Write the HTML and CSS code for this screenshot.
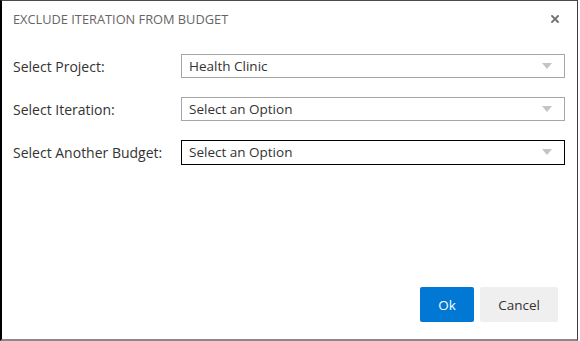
FILE: index.html
```html
<!DOCTYPE html>
<html>
<head>
<meta charset="utf-8">
<link rel="stylesheet" href="styles.css">
</head>
<body>
<div class="dialog">
  <div class="header">
    <div class="title">EXCLUDE ITERATION FROM BUDGET</div>
    <div class="close">
      <svg width="8" height="8" viewBox="0 0 8 8"><path d="M1 1 L7 7 M7 1 L1 7" stroke="#707070" stroke-width="1.9" stroke-linecap="square"/></svg>
    </div>
  </div>
  <div class="form">
    <div class="row">
      <label class="label">Select Project:</label>
      <div class="select"><span class="value">Health Clinic</span><span class="arrow"></span></div>
    </div>
    <div class="row">
      <label class="label">Select Iteration:</label>
      <div class="select"><span class="value">Select an Option</span><span class="arrow"></span></div>
    </div>
    <div class="row">
      <label class="label">Select Another Budget:</label>
      <div class="select focused"><span class="value">Select an Option</span><span class="arrow"></span></div>
    </div>
  </div>
  <div class="footer">
    <button class="btn primary">Ok</button>
    <button class="btn secondary">Cancel</button>
  </div>
</div>
</body>
</html>
```
FILE: styles.css
```css
html, body {
  margin: 0;
  padding: 0;
  background: #fff;
}
body {
  width: 580px;
  height: 341px;
  overflow: hidden;
  font-family: "Open Sans", "Noto Sans", sans-serif;
}
.dialog {
  box-sizing: border-box;
  width: 578px;
  height: 341px;
  border-top: 1px solid #4a4a4a;
  border-left: 2px solid #000;
  border-right: 1px solid #3c3c3c;
  border-bottom: 2px solid #8a8a8a;
  display: flex;
  flex-direction: column;
  background: #fff;
}
.header {
  display: flex;
  align-items: center;
  justify-content: space-between;
  height: 36px;
  padding: 0 18px 0 11px;
}
.title {
  font-size: 12.8px;
  color: #666;
}
.close {
  display: flex;
  align-items: center;
}
.form {
  display: flex;
  flex-direction: column;
  gap: 19px;
  padding: 17px 12px 0 11px;
  flex: 1;
}
.row {
  display: flex;
  align-items: center;
  height: 24px;
}
.label {
  width: 168px;
  font-size: 14px;
  color: #333;
}
.select {
  box-sizing: border-box;
  flex: 1;
  height: 24px;
  border: 1px solid #a6a6a6;
  display: flex;
  align-items: center;
  justify-content: space-between;
  padding: 0 12px 0 7px;
}
.select.focused {
  border-color: #000;
  height: 25px;
}
.value {
  font-size: 13.5px;
  color: #333;
}
.arrow {
  width: 0;
  height: 0;
  border-left: 5px solid transparent;
  border-right: 5px solid transparent;
  border-top: 6px solid #c4c4c4;
}
.footer {
  display: flex;
  justify-content: flex-end;
  gap: 6px;
  padding: 0 19px 17px 0;
}
.btn {
  height: 35px;
  border: none;
  border-radius: 2px;
  font-family: "Open Sans", "Noto Sans", sans-serif;
  font-size: 13.5px;
  cursor: pointer;
}
.primary {
  width: 54px;
  background: #0078d4;
  color: #fff;
}
.secondary {
  width: 78px;
  background: #efefef;
  color: #333;
}
```
